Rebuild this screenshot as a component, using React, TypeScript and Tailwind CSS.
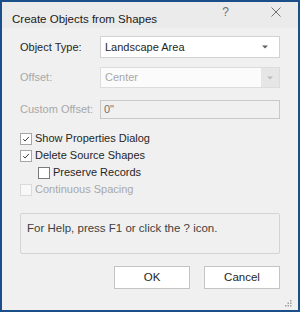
import type { ReactNode } from "react";

const font = { fontFamily: '"Liberation Sans", Arial, sans-serif' };

function Caret({ disabled }: { disabled?: boolean }) {
  return (
    <svg width="6" height="4" viewBox="0 0 6 4" aria-hidden>
      <path d="M0 0.5H6L3 3.5Z" fill={disabled ? "#bcbcbc" : "#606060"} />
    </svg>
  );
}

function Check() {
  return (
    <svg width="10" height="10" viewBox="0 0 10 10" aria-hidden>
      <path d="M2.2 5.2L4.1 7L7.9 2.9" fill="none" stroke="#3a3a3a" strokeWidth="1" />
    </svg>
  );
}

interface CheckRowProps {
  label: string;
  checked?: boolean;
  disabled?: boolean;
  indent?: boolean;
}

function CheckRow({ label, checked, disabled, indent }: CheckRowProps) {
  const box = disabled
    ? "border-[#dadada] bg-[#f8f8f8]"
    : checked
      ? "border-[#a6a6a6] bg-white"
      : "border-[#7a7a7a] bg-white";
  return (
    <div className={`flex h-[17px] items-center ${indent ? "pl-[18px]" : ""}`}>
      <span className={`flex h-[12px] w-[12px] items-center justify-center border ${box}`}>
        {checked && <Check />}
      </span>
      <span className={`ml-[3px] text-[11px] ${disabled ? "text-[#a8a8a8]" : "text-[#262626]"}`}>
        {label}
      </span>
    </div>
  );
}

function Row({ label, disabled, children }: { label: string; disabled?: boolean; children: ReactNode }) {
  return (
    <div className="flex items-center">
      <span className={`w-[80px] text-[11px] ${disabled ? "text-[#a8a8a8]" : "text-[#262626]"}`}>{label}</span>
      {children}
    </div>
  );
}

export default function App() {
  return (
    <div
      className="flex h-[312px] w-[300px] flex-col border-2 border-[#1b4f8a] bg-[#f0f0f0]"
      style={font}
    >
      <div className="flex h-[26px] items-start bg-[#ebebeb] pl-[10px]">
        <span className="mt-[10px] text-[11.5px] leading-[14px] text-[#1a1a1a]">Create Objects from Shapes</span>
        <span className="ml-auto mr-[42px] mt-[3px] text-[12px] leading-[14px] text-[#707070]">?</span>
        <svg className="mr-[17px] mt-[5px]" width="10" height="10" viewBox="0 0 10 10" aria-hidden>
          <path d="M0.5 0.5L9.5 9.5M9.5 0.5L0.5 9.5" stroke="#707070" strokeWidth="1" />
        </svg>
      </div>

      <div className="flex flex-1 flex-col pl-[18px] pr-[18px]">
        <div className="mt-[8px]">
          <Row label="Object Type:">
            <div className="flex h-[22px] flex-1 items-center border border-[#d2d2d2] bg-white pl-[4px] pr-[11px]">
              <span className="text-[11px] text-[#262626]">Landscape Area</span>
              <span className="ml-auto flex">
                <Caret />
              </span>
            </div>
          </Row>
        </div>

        <div className="mt-[9px]">
          <Row label="Offset:" disabled>
            <div className="flex h-[21px] flex-1 items-center border border-[#dcdcdc] bg-[#fbfbfb] pl-[4px]">
              <span className="text-[11px] text-[#a8a8a8]">Center</span>
              <span className="ml-auto flex h-full w-[18px] items-center justify-center bg-[#e6e6e6]">
                <Caret disabled />
              </span>
            </div>
          </Row>
        </div>

        <div className="mt-[12px]">
          <Row label="Custom Offset:" disabled>
            <div className="flex h-[19px] flex-1 items-center border border-[#c8c8c8] bg-[#f0f0f0] pl-[3px]">
              <span className="text-[11px] text-[#707070]">0"</span>
            </div>
          </Row>
        </div>

        <div className="mt-[11px] flex flex-col">
          <CheckRow label="Show Properties Dialog" checked />
          <CheckRow label="Delete Source Shapes" checked />
          <CheckRow label="Preserve Records" indent />
          <CheckRow label="Continuous Spacing" disabled />
        </div>

        <div className="mt-[15px] h-[41px] rounded-[2px] border border-[#d4d4d4] px-[6px] pt-[7px] text-[11.5px] leading-[14px] text-[#404040]">
          For Help, press F1 or click the ? icon.
        </div>

        <div className="mt-[12px] flex justify-end gap-[14px]">
          <button
            type="button"
            className="h-[23px] w-[76px] border border-[#c4c4c4] bg-white text-[11.5px] text-[#262626]"
          >
            OK
          </button>
          <button
            type="button"
            className="h-[23px] w-[76px] border border-[#c4c4c4] bg-white text-[11.5px] text-[#262626]"
          >
            Cancel
          </button>
        </div>

        <div className="mt-auto mb-[3px] mr-[-12px] flex justify-end">
          <svg width="7" height="7" viewBox="0 0 7 7" aria-hidden>
            <rect x="5" y="0" width="1.5" height="1.5" fill="#a0a0a0" />
            <rect x="2.5" y="2.5" width="1.5" height="1.5" fill="#a0a0a0" />
            <rect x="5" y="2.5" width="1.5" height="1.5" fill="#a0a0a0" />
            <rect x="0" y="5" width="1.5" height="1.5" fill="#a0a0a0" />
            <rect x="2.5" y="5" width="1.5" height="1.5" fill="#a0a0a0" />
            <rect x="5" y="5" width="1.5" height="1.5" fill="#a0a0a0" />
          </svg>
        </div>
      </div>
    </div>
  );
}
